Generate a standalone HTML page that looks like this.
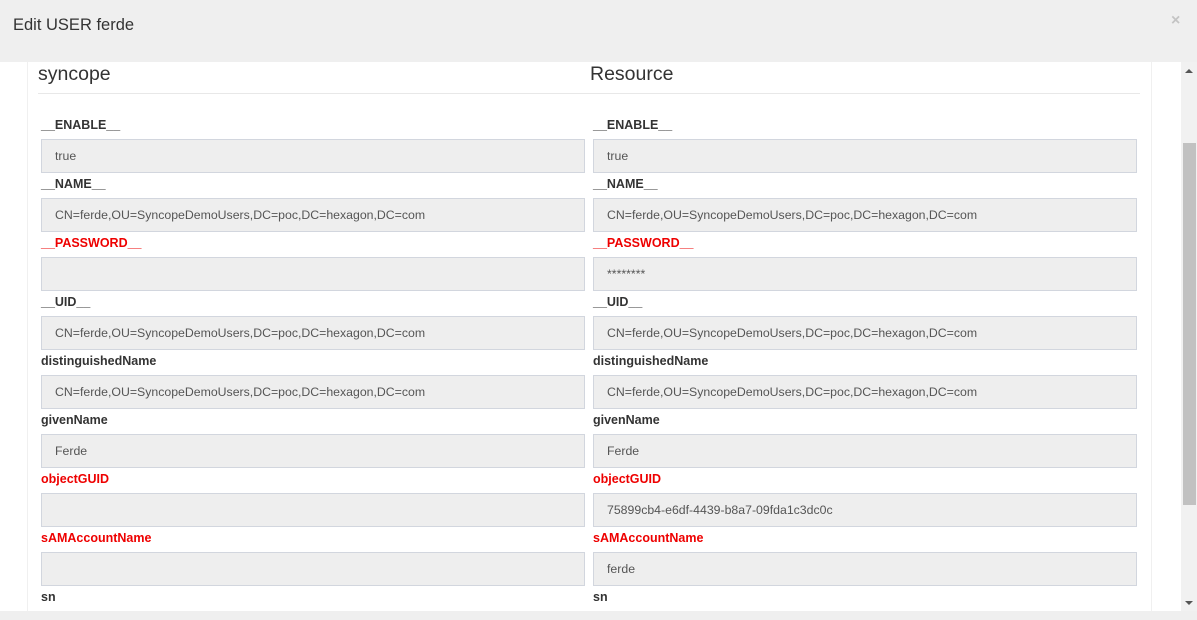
<!DOCTYPE html>
<html><head><meta charset="utf-8"><style>
*{margin:0;padding:0;box-sizing:border-box}
html,body{width:1197px;height:620px;overflow:hidden}
body{background:#fff;font-family:"Liberation Sans",sans-serif;position:relative}
.clip{position:absolute;left:0;top:0;width:1197px;height:611px;overflow:hidden}
.hdr{position:absolute;left:0;top:0;width:1197px;height:62px;background:#efefef}
.hdr .t{position:absolute;left:13px;top:16px;font-size:16.5px;color:#333}
.hdr .x{position:absolute;left:1171px;top:12px;font-size:16px;color:#c4c4c4;font-weight:bold}
.bot{position:absolute;left:0;top:611px;width:1197px;height:9px;background:#efefef}
.bl{position:absolute;top:62px;height:549px;width:1px;background:#f0f0f0}
.sb{position:absolute;left:1181px;top:62px;width:16px;height:549px;background:#f1f1f1}
.th{position:absolute;left:1183px;top:143px;width:13px;height:362px;background:#c1c1c1}
.h{position:absolute;top:63px;font-size:19.5px;color:#333}
.line{position:absolute;left:38px;top:93px;width:1102px;height:1px;background:#e8e8e8}
.lb{position:absolute;font-size:12.5px;font-weight:bold;color:#333}
.lb.r{color:#e00}
.in{position:absolute;height:34px;width:544px;background:#eee;border:1px solid #d2d6de;font-size:12.3px;color:#555;padding:9px 0 0 13px;white-space:nowrap}
</style></head><body>
<div class="clip">
<div class="hdr"><div class="t">Edit USER ferde</div><div class="x">×</div></div>
<div class="bl" style="left:27px"></div><div class="bl" style="left:1151px"></div>
<div class="sb"></div><div class="th"></div>
<svg style="position:absolute;left:1185px;top:68px" width="8" height="6"><path d="M0 5L4 1L8 5Z" fill="#555"/></svg>
<svg style="position:absolute;left:1185px;top:600px" width="8" height="6"><path d="M0 1L4 5L8 1Z" fill="#555"/></svg>
<div class="h" style="left:38px">syncope</div>
<div class="h" style="left:590px">Resource</div>
<div class="line"></div>
<div id="f"></div>
</div>
<div class="bot"></div>
<script>
var rows=[["__ENABLE__",0,"true","true"],["__NAME__",0,"CN=ferde,OU=SyncopeDemoUsers,DC=poc,DC=hexagon,DC=com","CN=ferde,OU=SyncopeDemoUsers,DC=poc,DC=hexagon,DC=com"],["__PASSWORD__",1,"","********"],["__UID__",0,"CN=ferde,OU=SyncopeDemoUsers,DC=poc,DC=hexagon,DC=com","CN=ferde,OU=SyncopeDemoUsers,DC=poc,DC=hexagon,DC=com"],["distinguishedName",0,"CN=ferde,OU=SyncopeDemoUsers,DC=poc,DC=hexagon,DC=com","CN=ferde,OU=SyncopeDemoUsers,DC=poc,DC=hexagon,DC=com"],["givenName",0,"Ferde","Ferde"],["objectGUID",1,"","75899cb4-e6df-4439-b8a7-09fda1c3dc0c"],["sAMAccountName",1,"","ferde"],["sn",0,"",""]];
var h="";rows.forEach(function(r,i){var y=116+59*i;[[41,r[2]],[593,r[3]]].forEach(function(c){h+='<div class="lb'+(r[1]?' r':'')+'" style="left:'+c[0]+'px;top:'+(y+2)+'px">'+r[0]+'</div><div class="in" style="left:'+c[0]+'px;top:'+(y+23)+'px">'+c[1]+'</div>';});});
document.getElementById("f").innerHTML=h;
</script>
</body></html>
